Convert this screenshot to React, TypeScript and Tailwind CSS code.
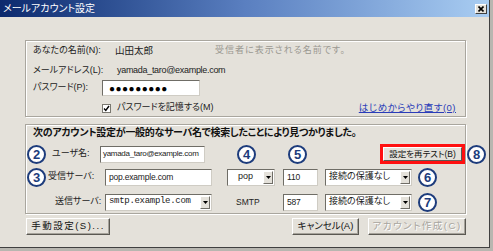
import React from 'react';

const Num: React.FC<{ n: string }> = ({ n }) => (
  <span className="flex h-[19px] w-[19px] shrink-0 items-center justify-center rounded-full border-2 border-[#1d3c7c] bg-white font-['Liberation_Sans',sans-serif] text-[13px] font-bold leading-none text-[#1d3c7c]">
    {n}
  </span>
);

const Input: React.FC<{ value: string; w: string; small?: boolean }> = ({ value, w, small }) => (
  <div
    className={`flex h-[17px] ${w} shrink-0 items-center overflow-hidden whitespace-nowrap border border-t-[#6f6d66] border-l-[#6f6d66] border-r-[#cfccc4] border-b-[#cfccc4] bg-white text-[#222] ${
      small ? 'px-[2px] text-[8px] tracking-[-0.3px]' : 'px-[3px] text-[8.5px] tracking-[-0.2px]'
    }`}
  >
    {value}
  </div>
);

const Select: React.FC<{ value: string; w: string; mono?: boolean; center?: boolean }> = ({ value, w, mono, center }) => (
  <div className={`flex h-[17px] ${w} shrink-0 items-stretch border border-t-[#6f6d66] border-l-[#6f6d66] border-r-[#cfccc4] border-b-[#cfccc4] bg-white`}>
    <div
      className={`flex flex-1 items-center overflow-hidden whitespace-nowrap px-[3px] text-[9px] text-[#222] ${center ? 'justify-center' : ''} ${mono ? "font-['Liberation_Mono','Noto_Sans_CJK_JP',monospace] text-[8.5px] tracking-[-0.3px]" : ''}`}
    >
      {value}
    </div>
    <div className="my-[1px] mr-[1px] flex w-[10px] items-center justify-center border border-t-white border-l-white border-r-[#6f6d66] border-b-[#6f6d66] bg-[#e4e1da]">
      <svg width="5" height="3" viewBox="0 0 5 3">
        <path d="M0 0h5L2.5 3z" fill="#000" />
      </svg>
    </div>
  </div>
);

const Button: React.FC<{ label: string; w: string; disabled?: boolean; wide?: boolean }> = ({ label, w, disabled, wide }) => (
  <div
    className={`flex h-[17px] ${w} items-center justify-center whitespace-nowrap border border-t-white border-l-white border-r-[#5a5852] border-b-[#5a5852] bg-[#e4e1da] text-[9.5px] shadow-[inset_-1px_-1px_0_#a6a39b] ${
      disabled ? 'text-[#a8a59e] [text-shadow:1px_1px_0_#fff]' : 'text-[#111]'
    } ${wide ? 'tracking-[1.5px]' : ''}`}
  >
    {label}
  </div>
);

const groupBox =
  'border border-[#a9a69e] shadow-[inset_1px_1px_0_#fff,1px_1px_0_#fff]';

export default function App() {
  return (
    <div className="h-[251px] w-[493px] bg-[#b8b6b0] font-['Liberation_Sans','Noto_Sans_CJK_JP',sans-serif] whitespace-nowrap [font-feature-settings:'palt']">
      <div className="flex h-[248px] w-[490px] flex-col border-r border-b border-[#404040] bg-[#e4e1da]">
        <div className="flex h-[17px] shrink-0 items-center justify-between bg-gradient-to-r from-[#0c2a6e] via-[#5a7fc0] to-[#a9cdf2] pl-[3px] pr-[2px]">
          <span className="text-[10px] leading-none text-white">メールアカウント設定</span>
          <div className="flex h-[10px] w-[12px] items-center justify-center border border-t-white border-l-white border-r-[#404040] border-b-[#404040] bg-[#e4e1da]">
            <svg width="6" height="6" viewBox="0 0 6 6">
              <path d="M0.5 0.5l5 5M5.5 0.5l-5 5" stroke="#000" strokeWidth="1.6" />
            </svg>
          </div>
        </div>

        <div className="ml-[25px] mt-[23px] flex w-[441px] flex-col">
          <div className={`flex h-[77px] flex-col pl-[7px] pr-[9px] text-[9px] text-[#222] ${groupBox}`}>
            <div className="mt-[3px] flex h-[14px] items-center">
              <span className="w-[82px] shrink-0">あなたの名前(N):</span>
              <span className="w-[100px] shrink-0 text-[9.5px]">山田太郎</span>
              <span className="tracking-[1px] text-[#9a9891]">受信者に表示される名前です。</span>
            </div>
            <div className="mt-[6px] flex h-[14px] items-center">
              <span className="w-[84px] shrink-0">メールアドレス(L):</span>
              <span className="text-[9px] tracking-[-0.3px]">yamada_taro@example.com</span>
            </div>
            <div className="mt-[2px] flex h-[16px] items-center">
              <span className="w-[69px] shrink-0">パスワード(P):</span>
              <div className="flex h-[16px] w-[98px] shrink-0 items-center border border-t-[#6f6d66] border-l-[#6f6d66] border-r-[#cfccc4] border-b-[#cfccc4] bg-white pl-[6px] text-[10px] tracking-[0.5px] text-black">
                ●●●●●●●●●
              </div>
            </div>
            <div className="mt-[5px] flex h-[14px] items-center">
              <div className="ml-[69px] flex h-[9px] w-[9px] shrink-0 items-center justify-center border border-[#7a7870] bg-white">
                <svg width="7" height="7" viewBox="0 0 7 7">
                  <path d="M1 3.5l1.8 2L6 1" stroke="#000" strokeWidth="1.4" fill="none" />
                </svg>
              </div>
              <span className="ml-[6px]">パスワードを記憶する(M)</span>
              <span className="ml-auto text-[9.5px] tracking-[0.5px] text-[#2a3cb8] underline">はじめからやり直す(0)</span>
            </div>
          </div>

          <div className={`mt-[7px] flex h-[90px] flex-col text-[9px] text-[#222] ${groupBox}`}>
            <div className="flex h-[14px] items-center pl-[7px] text-[10px] font-bold tracking-[-0.3px] text-[#111]">
              次のアカウント設定が一般的なサーバ名で検索したことにより見つかりました。
            </div>

            <div className="mt-[5px] flex h-[20px] items-center">
              <div className="ml-[1px] shrink-0">
                <Num n="2" />
              </div>
              <span className="ml-[6px] w-[48px] shrink-0">ユーザ名:</span>
              <Input value="yamada_taro@example.com" w="w-[105px]" small />
              <div className="ml-[32px] shrink-0">
                <Num n="4" />
              </div>
              <div className="ml-[32px] shrink-0">
                <Num n="5" />
              </div>
              <div className="ml-[73px] flex h-[20px] w-[85px] shrink-0 border-[3px] border-[#ff1010]">
                <div className="flex flex-1 items-center justify-center border border-t-white border-l-white border-r-[#5a5852] border-b-[#5a5852] bg-[#e4e1da] text-[8.5px] text-[#111]">
                  設定を再テスト(B)
                </div>
              </div>
              <div className="ml-[2px] shrink-0">
                <Num n="8" />
              </div>
            </div>

            <div className="mt-[3px] flex h-[20px] items-center">
              <div className="ml-[1px] shrink-0">
                <Num n="3" />
              </div>
              <span className="ml-[2px] w-[57px] shrink-0">受信サーバ:</span>
              <Input value="pop.example.com" w="w-[107px]" />
              <div className="ml-[15px] shrink-0">
                <Select value="pop" w="w-[48px]" center />
              </div>
              <div className="ml-[8px] shrink-0">
                <Input value="110" w="w-[35px]" />
              </div>
              <div className="ml-[7px] shrink-0">
                <Select value="接続の保護なし" w="w-[87px]" />
              </div>
              <div className="ml-[6px] shrink-0">
                <Num n="6" />
              </div>
            </div>

            <div className="mt-[5px] flex h-[20px] items-center">
              <span className="ml-[29px] w-[50px] shrink-0">送信サーバ:</span>
              <Select value="smtp.example.com" w="w-[107px]" mono />
              <span className="ml-[24px] w-[47px] shrink-0 text-[8.5px]">SMTP</span>
              <Input value="587" w="w-[35px]" />
              <div className="ml-[7px] shrink-0">
                <Select value="接続の保護なし" w="w-[87px]" />
              </div>
              <div className="ml-[6px] shrink-0">
                <Num n="7" />
              </div>
            </div>
          </div>

          <div className="mt-[4px] flex items-center">
            <div className="ml-[1px]">
              <Button label="手動設定(S)..." w="w-[84px]" wide />
            </div>
            <div className="ml-auto flex gap-[9px]">
              <Button label="キャンセル(A)" w="w-[67px]" />
              <Button label="アカウント作成(C)" w="w-[98px]" disabled wide />
            </div>
          </div>
        </div>
      </div>
    </div>
  );
}
